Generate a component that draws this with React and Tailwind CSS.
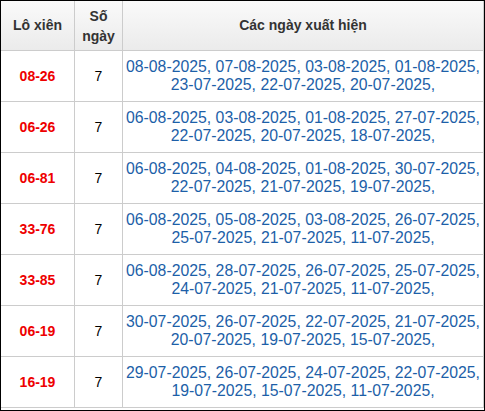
import React from 'react';

const rows = [
  { cap: '08-26', so: 7, ngay: '08-08-2025, 07-08-2025, 03-08-2025, 01-08-2025, 23-07-2025, 22-07-2025, 20-07-2025,' },
  { cap: '06-26', so: 7, ngay: '06-08-2025, 03-08-2025, 01-08-2025, 27-07-2025, 22-07-2025, 20-07-2025, 18-07-2025,' },
  { cap: '06-81', so: 7, ngay: '06-08-2025, 04-08-2025, 01-08-2025, 30-07-2025, 22-07-2025, 21-07-2025, 19-07-2025,' },
  { cap: '33-76', so: 7, ngay: '06-08-2025, 05-08-2025, 03-08-2025, 26-07-2025, 25-07-2025, 21-07-2025, 11-07-2025,' },
  { cap: '33-85', so: 7, ngay: '06-08-2025, 28-07-2025, 26-07-2025, 25-07-2025, 24-07-2025, 21-07-2025, 11-07-2025,' },
  { cap: '06-19', so: 7, ngay: '30-07-2025, 26-07-2025, 22-07-2025, 21-07-2025, 20-07-2025, 19-07-2025, 15-07-2025,' },
  { cap: '16-19', so: 7, ngay: '29-07-2025, 26-07-2025, 24-07-2025, 22-07-2025, 19-07-2025, 15-07-2025, 11-07-2025,' },
];

const App = () => {
  return (
    <div className="w-[485px] h-[411px] border border-black bg-white overflow-hidden font-['Liberation_Sans',Arial,sans-serif]">
      {/* header */}
      <div className="flex h-[50px] border-b border-[#cccccc] bg-gradient-to-b from-[#fafafa] to-[#ebebeb] text-[14px] font-bold text-[#333333]">
        <div className="w-[74px] border-r border-[#cccccc] flex items-center justify-center">Lô xiên</div>
        <div className="w-[48px] border-r border-[#cccccc] flex items-center justify-center text-center leading-[20px]">
          Số<br />ngày
        </div>
        <div className="flex-1 border-r border-[#cccccc] flex items-center justify-center">Các ngày xuất hiện</div>
      </div>

      {rows.map((r) => (
        <div key={r.cap} className="flex h-[51px] border-b border-[#cccccc]">
          <div className="w-[74px] border-r border-[#cccccc] flex items-center justify-center text-[14px] font-bold text-[#ee0000]">
            {r.cap}
          </div>
          <div className="w-[48px] border-r border-[#cccccc] flex items-center justify-center text-[14px] text-black">
            {r.so}
          </div>
          <div className="flex-1 border-r border-[#cccccc] flex items-center justify-center text-center text-[15.8px] leading-[18px] text-[#1d5fa8]">
            <p>
              {r.ngay.split(' ').map((d, i) => (
                <React.Fragment key={i}>
                  <span className="whitespace-nowrap">{d}</span>{' '}
                </React.Fragment>
              ))}
            </p>
          </div>
        </div>
      ))}
    </div>
  );
};

export default App;
